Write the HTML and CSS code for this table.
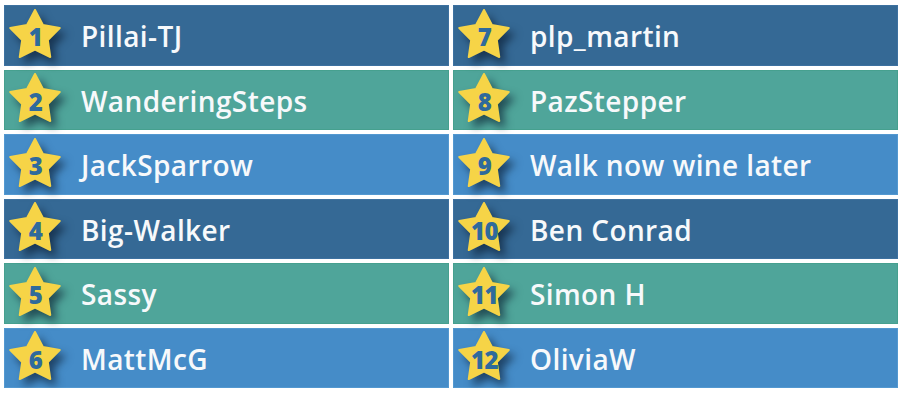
FILE: index.html
```html
<!DOCTYPE html>
<html>
<head>
<meta charset="utf-8">
<link rel="stylesheet" href="styles.css">
</head>
<body>
<div class="board">
  <div class="col">
    <div class="row dark"><div class="star"><svg viewBox="0 0 60 60" width="60" height="60"><polygon points="30,4 37.94,19.08 54.73,21.97 42.84,34.17 45.28,51.03 30,43.5 14.72,51.03 17.16,34.17 5.27,21.97 22.06,19.08"/></svg><span class="num">1</span></div><span class="name">Pillai-TJ</span></div>
    <div class="row teal"><div class="star"><svg viewBox="0 0 60 60" width="60" height="60"><polygon points="30,4 37.94,19.08 54.73,21.97 42.84,34.17 45.28,51.03 30,43.5 14.72,51.03 17.16,34.17 5.27,21.97 22.06,19.08"/></svg><span class="num">2</span></div><span class="name">WanderingSteps</span></div>
    <div class="row mid"><div class="star"><svg viewBox="0 0 60 60" width="60" height="60"><polygon points="30,4 37.94,19.08 54.73,21.97 42.84,34.17 45.28,51.03 30,43.5 14.72,51.03 17.16,34.17 5.27,21.97 22.06,19.08"/></svg><span class="num">3</span></div><span class="name">JackSparrow</span></div>
    <div class="row dark"><div class="star"><svg viewBox="0 0 60 60" width="60" height="60"><polygon points="30,4 37.94,19.08 54.73,21.97 42.84,34.17 45.28,51.03 30,43.5 14.72,51.03 17.16,34.17 5.27,21.97 22.06,19.08"/></svg><span class="num">4</span></div><span class="name">Big-Walker</span></div>
    <div class="row teal"><div class="star"><svg viewBox="0 0 60 60" width="60" height="60"><polygon points="30,4 37.94,19.08 54.73,21.97 42.84,34.17 45.28,51.03 30,43.5 14.72,51.03 17.16,34.17 5.27,21.97 22.06,19.08"/></svg><span class="num">5</span></div><span class="name">Sassy</span></div>
    <div class="row mid"><div class="star"><svg viewBox="0 0 60 60" width="60" height="60"><polygon points="30,4 37.94,19.08 54.73,21.97 42.84,34.17 45.28,51.03 30,43.5 14.72,51.03 17.16,34.17 5.27,21.97 22.06,19.08"/></svg><span class="num">6</span></div><span class="name">MattMcG</span></div>
  </div>
  <div class="col">
    <div class="row dark"><div class="star"><svg viewBox="0 0 60 60" width="60" height="60"><polygon points="30,4 37.94,19.08 54.73,21.97 42.84,34.17 45.28,51.03 30,43.5 14.72,51.03 17.16,34.17 5.27,21.97 22.06,19.08"/></svg><span class="num">7</span></div><span class="name">plp_martin</span></div>
    <div class="row teal"><div class="star"><svg viewBox="0 0 60 60" width="60" height="60"><polygon points="30,4 37.94,19.08 54.73,21.97 42.84,34.17 45.28,51.03 30,43.5 14.72,51.03 17.16,34.17 5.27,21.97 22.06,19.08"/></svg><span class="num">8</span></div><span class="name">PazStepper</span></div>
    <div class="row mid"><div class="star"><svg viewBox="0 0 60 60" width="60" height="60"><polygon points="30,4 37.94,19.08 54.73,21.97 42.84,34.17 45.28,51.03 30,43.5 14.72,51.03 17.16,34.17 5.27,21.97 22.06,19.08"/></svg><span class="num">9</span></div><span class="name">Walk now wine later</span></div>
    <div class="row dark"><div class="star"><svg viewBox="0 0 60 60" width="60" height="60"><polygon points="30,4 37.94,19.08 54.73,21.97 42.84,34.17 45.28,51.03 30,43.5 14.72,51.03 17.16,34.17 5.27,21.97 22.06,19.08"/></svg><span class="num">10</span></div><span class="name">Ben Conrad</span></div>
    <div class="row teal"><div class="star"><svg viewBox="0 0 60 60" width="60" height="60"><polygon points="30,4 37.94,19.08 54.73,21.97 42.84,34.17 45.28,51.03 30,43.5 14.72,51.03 17.16,34.17 5.27,21.97 22.06,19.08"/></svg><span class="num">11</span></div><span class="name">Simon H</span></div>
    <div class="row mid"><div class="star"><svg viewBox="0 0 60 60" width="60" height="60"><polygon points="30,4 37.94,19.08 54.73,21.97 42.84,34.17 45.28,51.03 30,43.5 14.72,51.03 17.16,34.17 5.27,21.97 22.06,19.08"/></svg><span class="num">12</span></div><span class="name">OliviaW</span></div>
  </div>
</div>
</body>
</html>
```
FILE: styles.css
```css
html, body {
  margin: 0;
  padding: 0;
  background: #ffffff;
}
.board {
  display: flex;
  gap: 4px;
  padding: 5px 0 0 4px;
}
.col {
  width: 445px;
  display: flex;
  flex-direction: column;
  gap: 4px;
}
.row {
  height: 60.5px;
  box-sizing: border-box;
  display: flex;
  align-items: center;
}
.dark { background: #356995; box-shadow: inset 0 0 0 1px #3d71a0; }
.teal { background: #4fa59a; box-shadow: inset 0 0 0 1px #46a08f; }
.mid  { background: #458cc8; box-shadow: inset 0 0 0 1px #5398d0; }
.star {
  display: grid;
  width: 60px;
  height: 60px;
  margin-left: 1px;
  margin-top: 1px;
  flex: none;
}
.star svg {
  grid-area: 1 / 1;
  overflow: visible;
  filter: drop-shadow(5px 6px 4px rgba(5, 20, 40, 0.6));
}
.star polygon {
  fill: #f6d447;
  stroke: #f6d447;
  stroke-width: 2;
  stroke-linejoin: round;
}
.num {
  grid-area: 1 / 1;
  position: relative;
  z-index: 1;
  align-self: center;
  justify-self: center;
  margin-top: 3px;
  margin-left: 1px;
  font-family: "Open Sans", sans-serif;
  font-weight: 800;
  font-size: 24px;
  letter-spacing: -0.5px;
  line-height: 1;
  color: #2f6a9c;
}
.name {
  margin-left: 16px;
  margin-top: 2px;
  font-family: "Open Sans", sans-serif;
  font-weight: 600;
  font-size: 28px;
  letter-spacing: 0.4px;
  color: #f7f9fb;
  white-space: nowrap;
}
```
